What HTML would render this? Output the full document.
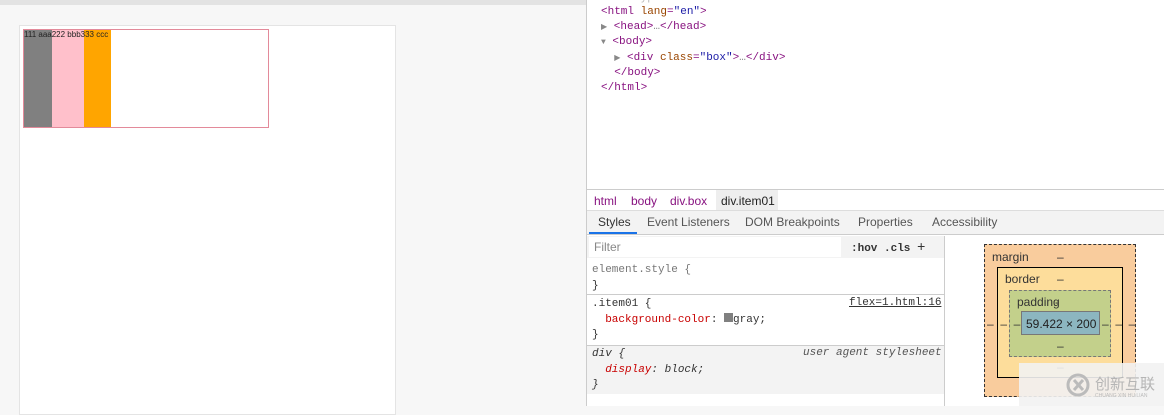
<!DOCTYPE html>
<html><head><style>
*{margin:0;padding:0;box-sizing:border-box}
body{width:1164px;height:406px;overflow:hidden;background:#f7f7f7;position:relative;font-family:"Liberation Sans",sans-serif;font-size:12px;color:#333}
.a{position:absolute}
.mono{font-family:"Liberation Mono",monospace;font-size:11px}
.tag{color:#881280}.attr{color:#994500}.val{color:#1a1aa6}
</style></head><body>
<div class="a" style="left:0;top:0;width:586px;height:5px;background:#e3e3e3"></div>
<div class="a" style="left:19px;top:25px;width:377px;height:390px;background:#fff;border:1px solid #e4e4e4"></div>
<div class="a" style="left:23px;top:29px;width:246px;height:99px;border:1px solid #e38a9a"></div>
<div class="a" style="left:24px;top:30px;width:28px;height:97px;background:#808080"></div>
<div class="a" style="left:52px;top:30px;width:32px;height:97px;background:#ffc0cb"></div>
<div class="a" style="left:84px;top:30px;width:27px;height:97px;background:#ffa500"></div>
<div class="a" style="left:24px;top:30px;font-size:8px;color:#222;white-space:nowrap;line-height:10px">111 aaa222 bbb333 ccc</div>

<div class="a" style="left:586px;top:0;width:578px;height:406px;background:#fff;border-left:1px solid #ccc"></div>
<div class="a mono" style="left:601px;top:-8px;color:#bbb">&lt;!doctype html&gt;</div>
<div class="a mono" style="left:601px;top:5px;line-height:14.5px;white-space:pre;color:#888"><span class="tag">&lt;html <span class="attr">lang</span>=<span class="val">"en"</span>&gt;</span>
<span style="font-size:8px">▶</span> <span class="tag">&lt;head&gt;</span>…<span class="tag">&lt;/head&gt;</span>
<span style="font-size:8px">▼</span> <span class="tag">&lt;body&gt;</span>
  <span style="font-size:8px">▶</span> <span class="tag">&lt;div <span class="attr">class</span>=<span class="val">"box"</span>&gt;</span>…<span class="tag">&lt;/div&gt;</span>
  <span class="tag">&lt;/body&gt;</span>
<span class="tag">&lt;/html&gt;</span></div>

<div class="a" style="left:587px;top:189px;width:577px;height:22px;border-top:1px solid #ccc;border-bottom:1px solid #ddd;background:#fff"></div>
<div class="a" style="left:594px;top:194px;color:#881280">html</div>
<div class="a" style="left:631px;top:194px;color:#881280">body</div>
<div class="a" style="left:670px;top:194px;color:#881280">div.box</div>
<div class="a" style="left:716px;top:190px;width:62px;height:20px;background:#eee"></div>
<div class="a" style="left:721px;top:194px;color:#222">div.item01</div>
<div class="a" style="left:587px;top:211px;width:577px;height:24px;background:#f3f3f3;border-bottom:1px solid #ccc"></div>
<div class="a" style="left:598px;top:215px;color:#333">Styles</div>
<div class="a" style="left:589px;top:232px;width:48px;height:2px;background:#1a73e8"></div>
<div class="a" style="left:647px;top:215px;color:#555">Event Listeners</div>
<div class="a" style="left:745px;top:215px;color:#555">DOM Breakpoints</div>
<div class="a" style="left:858px;top:215px;color:#555">Properties</div>
<div class="a" style="left:932px;top:215px;color:#555">Accessibility</div>

<div class="a" style="left:944px;top:236px;width:1px;height:170px;background:#ccc"></div>
<div class="a" style="left:587px;top:236px;width:357px;height:22px;background:#f3f3f3"></div>
<div class="a" style="left:589px;top:237px;width:252px;height:20px;background:#fff"></div>
<div class="a" style="left:594px;top:240px;color:#888">Filter</div>
<div class="a mono" style="left:851px;top:240px;color:#333;font-weight:bold">:hov .cls <span style="font-weight:normal;font-size:14px">+</span></div>
<div class="a mono" style="left:592px;top:262px;line-height:16px;color:#777">element.style {<br><span style="color:#333">}</span></div>
<div class="a" style="left:587px;top:294px;width:357px;height:1px;background:#ccc"></div>
<div class="a mono" style="left:592px;top:297px;line-height:15.5px;color:#333;white-space:pre">.item01 {
  <span style="color:#c80000">background-color</span>: <span style="display:inline-block;width:9px;height:9px;background:gray"></span>gray;
}</div>
<div class="a mono" style="left:849px;top:297px;color:#333;text-decoration:underline">flex=1.html:16</div>
<div class="a" style="left:587px;top:345px;width:357px;height:1px;background:#ccc"></div>
<div class="a" style="left:587px;top:346px;width:357px;height:48px;background:#f3f3f3"></div>
<div class="a mono" style="left:592px;top:347px;line-height:15.5px;color:#333;white-space:pre;font-style:italic">div {
  <span style="color:#c80000">display</span>: block;
}</div>
<div class="a mono" style="left:803px;top:347px;color:#555;font-style:italic">user agent stylesheet</div>

<div class="a" style="left:984px;top:244px;width:152px;height:153px;background:#f9cc9d;border:1px dashed #333"></div>
<div class="a" style="left:992px;top:250px">margin</div><div class="a" style="left:1057px;top:250px">–</div>
<div class="a" style="left:997px;top:267px;width:126px;height:111px;background:#fddd9b;border:1px solid #000"></div>
<div class="a" style="left:1005px;top:272px">border</div><div class="a" style="left:1057px;top:272px">–</div>
<div class="a" style="left:1009px;top:290px;width:102px;height:67px;background:#c3d08b;border:1px dashed #777"></div>
<div class="a" style="left:1017px;top:295px">padding</div><div class="a" style="left:1055px;top:295px">-</div>
<div class="a" style="left:1021px;top:311px;width:79px;height:24px;background:#8cb6c0;border:1px solid #777"></div>
<div class="a" style="left:1026px;top:317px;color:#222">59.422 × 200</div>
<div class="a" style="left:987px;top:317px">–&nbsp;&nbsp;–&nbsp;&nbsp;–</div>
<div class="a" style="left:1102px;top:317px">–&nbsp;&nbsp;–&nbsp;&nbsp;–</div>
<div class="a" style="left:1057px;top:339px">–</div>
<div class="a" style="left:1057px;top:360px">–</div>
<div class="a" style="left:1019px;top:363px;width:145px;height:43px;background:#f2f2f2;opacity:.9"></div>
<svg class="a" style="left:1065px;top:372px" width="26" height="26" viewBox="0 0 26 26"><circle cx="13" cy="13" r="10" fill="none" stroke="#bbb" stroke-width="3"/><path d="M9 8l9 10M18 8l-9 10" stroke="#bbb" stroke-width="3"/></svg>
<div class="a" style="left:1095px;top:373px;font-size:15px;color:#b5b5b5;font-family:'Liberation Sans','Noto Sans CJK SC',sans-serif">创新互联</div>
<div class="a" style="left:1095px;top:393px;font-size:5px;color:#bbb">CHUANG XIN HU LIAN</div>
</body></html>
